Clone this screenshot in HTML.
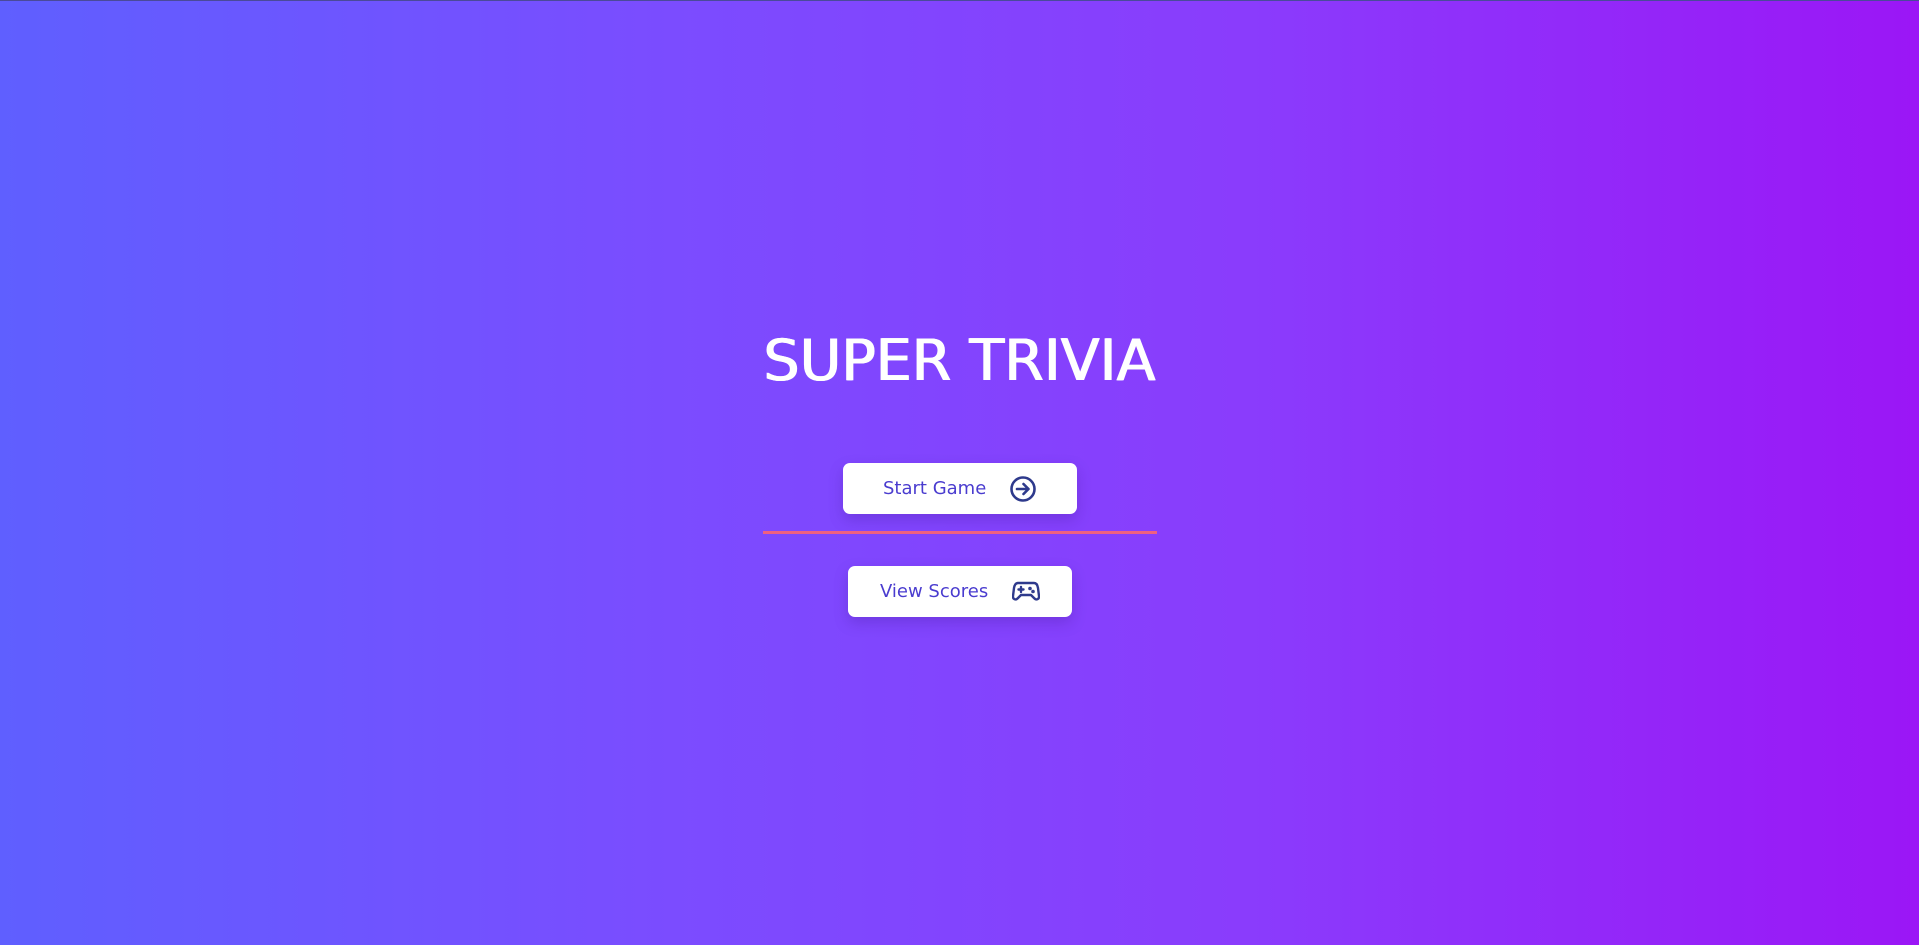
<!DOCTYPE html>
<html><head><meta charset="utf-8"><style>
html,body{margin:0;padding:0;width:1919px;height:945px;overflow:hidden}
body{background:linear-gradient(90deg,#5f5fff 0%,#7b4cff 35%,#8a3cfc 65%,#9b16f6 100%);border-top:1px solid #4a4a9a;box-sizing:border-box;position:relative;font-family:"DejaVu Sans","Liberation Sans",sans-serif}
h1{position:absolute;left:0;right:0;top:327px;margin:0;text-align:center;color:#fff;font-weight:normal;font-size:57px;letter-spacing:0px;text-shadow:0.7px 0 0 #fff,-0.7px 0 0 #fff;font-family:"DejaVu Sans","Liberation Sans",sans-serif}
.btn{position:absolute;background:#fff;border-radius:7px;box-shadow:0 6px 14px rgba(60,20,140,0.25);display:flex;align-items:center;color:#4a3ccf;font-size:18px}
.line{position:absolute;left:763px;width:394px;top:530px;height:3px;background:#ef6180}
</style></head><body>
<h1>SUPER TRIVIA</h1>
<div class="btn" style="left:843px;top:462px;width:234px;height:51px">
<span style="position:absolute;left:40px;top:15px">Start Game</span>
<svg style="position:absolute;left:166px;top:12px" width="28" height="28" viewBox="0 0 28 28" fill="none" stroke="#2e3a8c" stroke-width="2.6" stroke-linecap="round" stroke-linejoin="round"><circle cx="14" cy="14" r="11.5"/><path d="M8 14h11M14.5 9l5 5-5 5"/></svg>
</div>
<div class="line"></div>
<div class="btn" style="left:848px;top:565px;width:224px;height:51px">
<span style="position:absolute;left:32px;top:15px">View Scores</span>
<svg style="position:absolute;left:164px;top:14px" width="28" height="24" viewBox="0 0 28 24" fill="none" stroke="#2e3a8c" stroke-width="2.4" stroke-linecap="round" stroke-linejoin="round"><path d="M6 3h16c2.5 0 3.5 2 4 5l1 8c.4 3-2.5 4.5-4.5 2.5L19 15H9l-3.5 3.5C3.5 20.5.6 19 1 16l1-8c.5-3 1.5-5 4-5z"/><path d="M6.5 9.5h5M9 7v5"/><circle cx="18" cy="8.5" r=".6" fill="#2e3a8c"/><circle cx="21" cy="11.5" r=".6" fill="#2e3a8c"/></svg>
</div>
</body></html>
